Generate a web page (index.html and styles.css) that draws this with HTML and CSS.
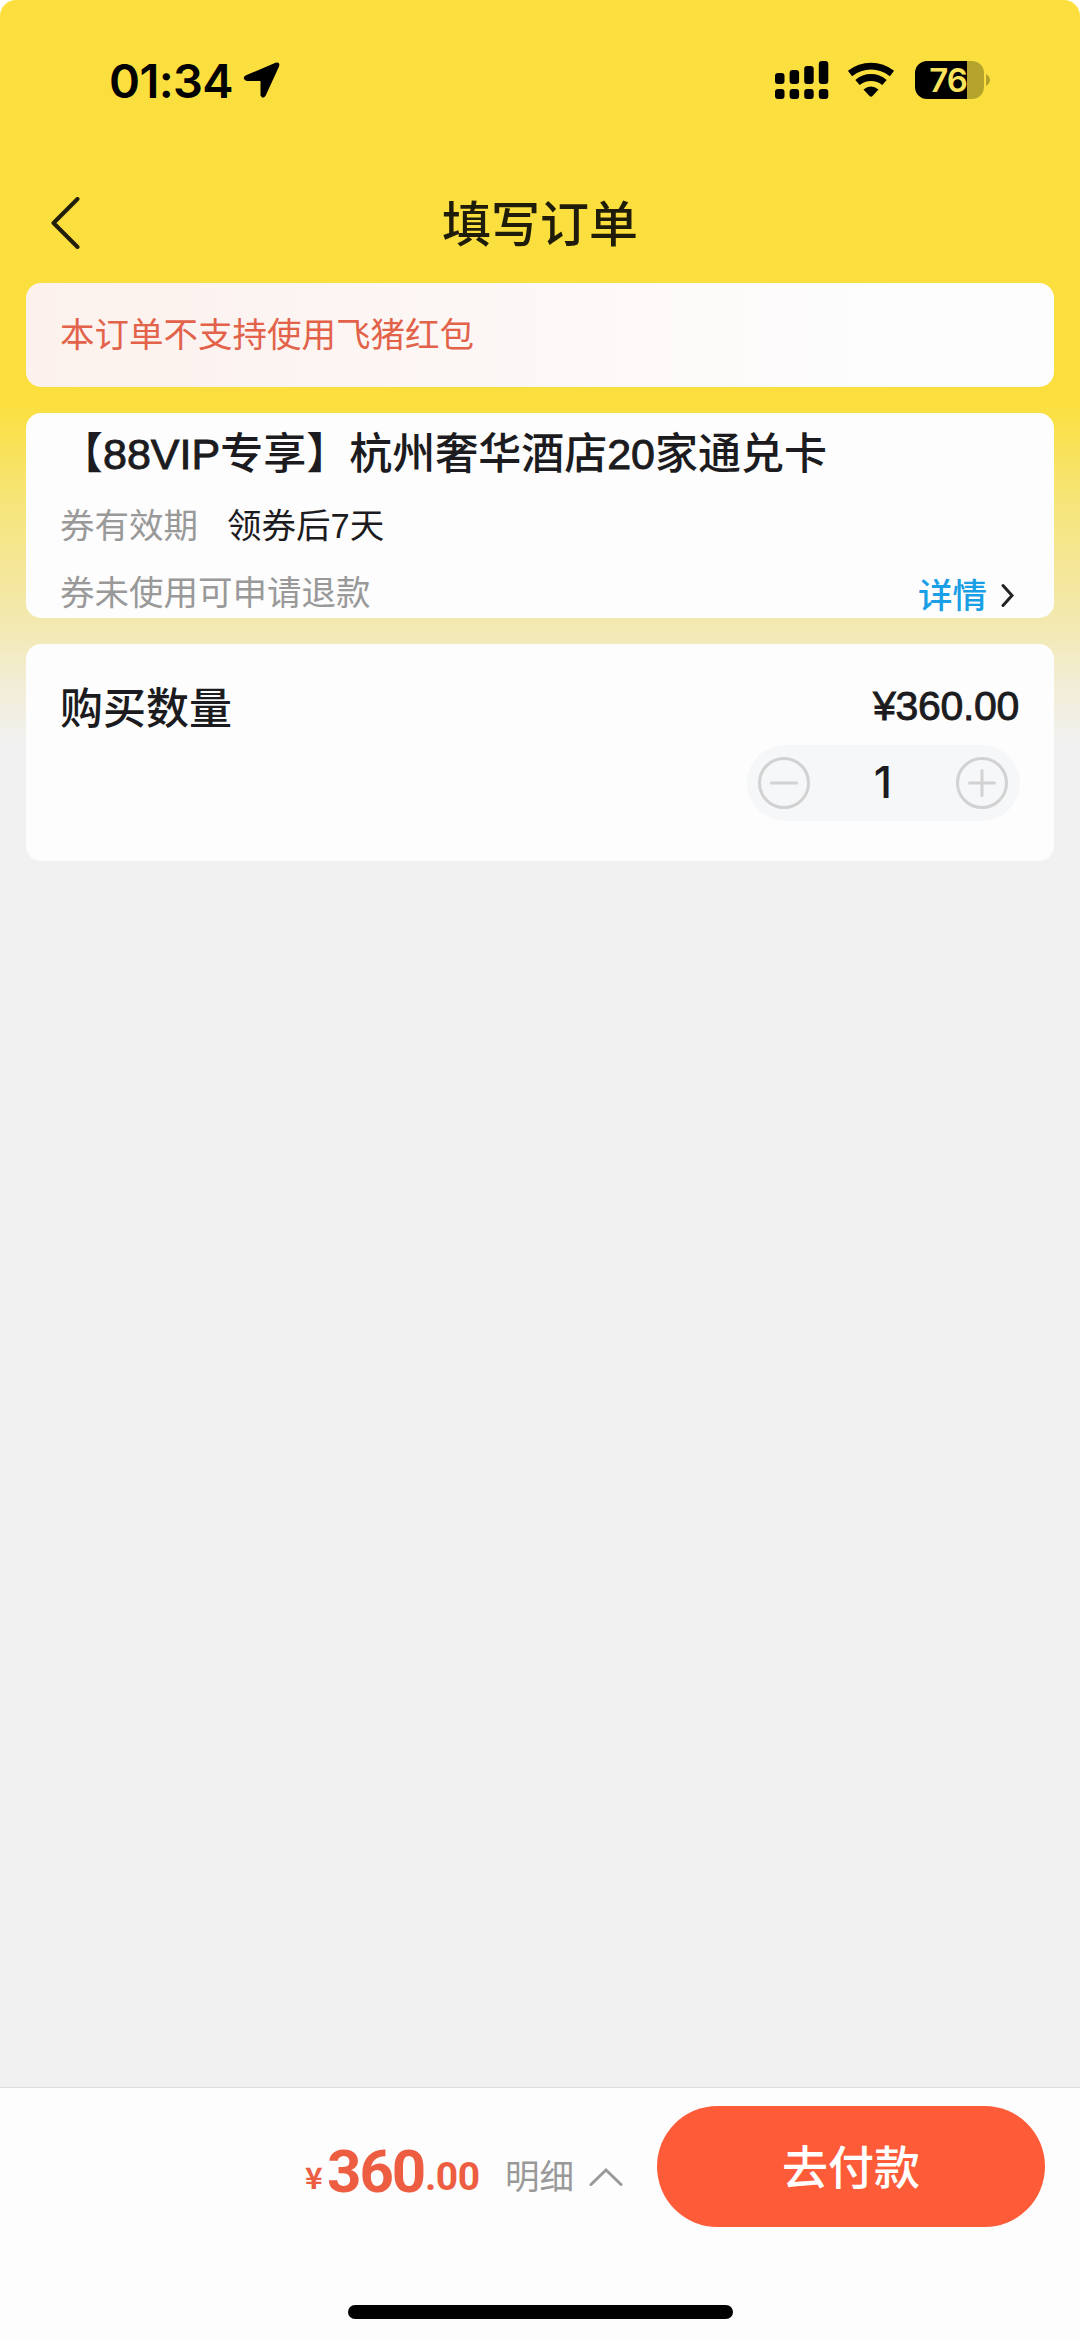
FILE: index.html
```html
<!DOCTYPE html>
<html lang="zh-CN">
<head>
<meta charset="utf-8">
<title>填写订单</title>
<link rel="stylesheet" href="styles.css">
</head>
<body>
<div class="screen">
  <div class="status-bar">
    <span class="time">01:34</span>
    <svg class="location" width="38" height="38" viewBox="0 0 38 38"><path d="M2.500 14.500 32.500 1.800Q37.500 .3 36 5.500L22.500 35Q19.500 38.500 17.500 34.500V20H3.500Q-1.500 17.500 2.500 14.500Z"/></svg>
    <svg class="signal" width="54" height="38" viewBox="0 0 54 38">
      <rect x="0" y="12" width="9.500" height="11" rx="3"/><rect x="14.600" y="9" width="9.500" height="14" rx="3"/><rect x="29.200" y="5" width="9.500" height="18" rx="3"/><rect x="43.800" y="0" width="9.500" height="23" rx="3"/>
      <rect x="0" y="28" width="9.500" height="10" rx="3"/><rect x="14.600" y="28" width="9.500" height="10" rx="3"/><rect x="29.200" y="28" width="9.500" height="10" rx="3"/><rect x="43.800" y="28" width="9.500" height="10" rx="3"/>
    </svg>
    <svg class="wifi" width="48" height="36" viewBox="0 0 48 36">
      <g fill="none" stroke="#000" stroke-width="6.800"><path d="M3 11.500Q12.500 4.200 24 4.200T45 11.500"/><path d="M10.500 20.500Q16.500 15.500 24 15.500T37.500 20.500"/></g>
      <path d="M16.500 27.500Q24 21.500 31.500 27.500L25.500 34Q24 35.500 22.500 34Z"/>
    </svg>
    <span class="battery">76</span>
    <svg class="battery-tip" width="4" height="12" viewBox="0 0 4 12"><path d="M0 0Q4 2.500 4 6T0 12Z" fill="#b6a32c"/></svg>
  </div>

  <header class="nav">
    <svg class="back" width="30" height="52" viewBox="0 0 30 52"><path d="M26.500 2 2.500 26 26.500 50"/></svg>
    <h1 class="nav-title">填写订单</h1>
  </header>

  <main class="cards">
    <section class="card notice">本订单不支持使用飞猪红包</section>

    <section class="card product">
      <h2 class="product-title">【<span class="latin">88VIP</span>专享】杭州奢华酒店<span class="latin">20</span>家通兑卡</h2>
      <p class="line validity"><span class="label">券有效期</span><span>领券后7天</span></p>
      <div class="line refund">
        <span class="label">券未使用可申请退款</span>
        <a class="detail">详情<svg width="15" height="24" viewBox="0 0 15 24"><path d="M3 2.500 12 12.500 3 22.500"/></svg></a>
      </div>
    </section>

    <section class="card quantity">
      <div class="quantity-head"><h2>购买数量</h2><span class="price latin">¥360.00</span></div>
      <div class="stepper">
        <svg width="52" height="52" viewBox="0 0 52 52"><circle cx="26" cy="26" r="24.500"/><path d="M13.500 26h25"/></svg>
        <span class="count">1</span>
        <svg width="52" height="52" viewBox="0 0 52 52"><circle cx="26" cy="26" r="24.500"/><path d="M13.500 26h25M26 13.500v25"/></svg>
      </div>
    </section>
  </main>

  <footer class="footer">
    <div class="pay-row">
      <div class="total"><span class="yen">¥</span><span class="whole">360</span><span class="cents">.00</span></div>
      <div class="breakdown">明细<svg width="34" height="20" viewBox="0 0 34 20"><path d="M2 17.500 17 3 32 17.500"/></svg></div>
      <button class="pay">去付款</button>
    </div>
    <div class="home-indicator"></div>
  </footer>
</div>
</body>
</html>
```

FILE: styles.css
```css
* { box-sizing: border-box; }
body { margin: 0; background: #fff; }
h1, h2, p { margin: 0; font-weight: 500; }
svg { display: block; flex: none; }

.screen {
  width: 1080px;
  height: 2341px;
  display: flex;
  flex-direction: column;
  overflow: hidden;
  border-radius: 16px 16px 0 0;
  background: linear-gradient(to bottom, #fbdf3f 0, #fbdf3f 405px, #f6e578 500px, #f3e9b4 630px, #f2edd3 680px, #f1f1f1 745px);
  font-family: "Liberation Sans", "Noto Sans CJK SC", sans-serif;
  color: #1b1b20;
}

.status-bar {
  display: flex;
  align-items: center;
  height: 162px;
  padding: 0 90px 2px 109px;
}
.time {
  width: 124px;
  padding-top: 2px;
  font: 600 47px/60px Inter, sans-serif;
  letter-spacing: -0.600px;
  color: #000;
}
.location { margin-left: 10px; }
.signal { margin-left: auto; }
.wifi { margin-left: 18px; }
.battery {
  width: 69px;
  height: 38px;
  margin-left: 20px;
  padding-right: 3px;
  border-radius: 12px;
  background: linear-gradient(to right, #000 52px, #b6a32c 52px);
  font: 600 33px/38px Inter, sans-serif;
  letter-spacing: -1px;
  text-align: center;
  color: #fbe45c;
}
.battery-tip { margin-left: 2px; }

.nav {
  display: grid;
  grid-template-columns: 100px 1fr 100px;
  align-items: center;
  height: 121px;
}
.back {
  margin-left: 51px;
  fill: none;
  stroke: #221e0a;
  stroke-width: 4;
  stroke-linecap: round;
  stroke-linejoin: round;
}
.nav-title {
  padding-top: 4px;
  font-size: 49px;
  line-height: 60px;
  text-align: center;
  color: #1f1c0a;
}

.cards {
  flex: 1;
  display: flex;
  flex-direction: column;
  gap: 26px;
  padding: 0 26px;
}
.card {
  border-radius: 15px;
  background: #fdfdfd;
  padding: 0 34px;
}
.notice {
  height: 104px;
  font-size: 34.500px;
  line-height: 105px;
  color: #e2624a;
  background: linear-gradient(to right, #fcf1ed, #fdfdfd 85%);
}
.product { height: 205px; overflow: hidden; }
.product-title {
  padding-top: 11px;
  font-size: 43px;
  line-height: 60px;
  white-space: nowrap;
}
.latin { -webkit-text-stroke: 0.900px currentColor; }
.line { font-size: 34.500px; line-height: 50px; font-weight: 400; }
.label { color: #999; }
.validity { display: flex; gap: 29px; margin-top: 17px; }
.refund {
  display: flex;
  justify-content: space-between;
  margin-top: 17px;
}
.detail {
  display: flex;
  align-items: center;
  gap: 13px;
  padding: 3px 5px 0 0;
  font-weight: 500;
  color: #1a9fe6;
}
.detail svg { margin-top: -3px; fill: none; stroke: #222; stroke-width: 3; stroke-linecap: round; }

.quantity { height: 217px; padding-top: 35px; }
.quantity-head {
  display: flex;
  justify-content: space-between;
  align-items: center;
  height: 60px;
}
.quantity-head h2 { font-size: 43px; line-height: 60px; }
.price { padding: 0 1px 5px 0; font-size: 41px; line-height: 55px; letter-spacing: -0.300px; }
.stepper {
  display: flex;
  justify-content: space-between;
  align-items: center;
  width: 273px;
  height: 76px;
  margin: 6px 0 0 auto;
  padding: 0 12px 0 11px;
  border-radius: 38px;
  background: #f5f7f8;
}
.stepper svg { fill: none; stroke: #d2d2d3; stroke-width: 3; stroke-linecap: round; }
.count { padding-bottom: 2px; font: 500 44px/60px Inter, sans-serif; }

.footer {
  height: 254px;
  border-top: 1px solid #dcdcdc;
  background: #fdfdfd;
}
.pay-row {
  display: flex;
  justify-content: flex-end;
  align-items: center;
  height: 121px;
  margin: 18px 35px 0 0;
}
.total {
  display: flex;
  align-items: baseline;
  width: 175px;
  margin-top: 17px;
  font-family: Roboto, sans-serif;
  font-weight: 700;
  color: #ec5d41;
  line-height: 70px;
}
.yen {
  width: 22px;
  font: 700 30px/60px "Noto Sans CJK SC", sans-serif;
  transform: translateY(-3px);
}
.whole { width: 98px; font-size: 60px; letter-spacing: -2px; }
.cents { font-size: 39px; letter-spacing: -0.500px; transform: translateY(-2px); }
.breakdown {
  display: flex;
  align-items: center;
  gap: 15px;
  margin: 21px 34px 0 25px;
  font-size: 34.500px;
  line-height: 50px;
  color: #999;
}
.breakdown svg { fill: none; stroke: #999; stroke-width: 3; stroke-linecap: round; }
.pay {
  width: 388px;
  height: 121px;
  padding: 0 0 4px;
  border: 0;
  border-radius: 61px;
  background: #fe5b39;
  font: 500 46px/117px "Noto Sans CJK SC", sans-serif;
  color: #fff;
}
.home-indicator {
  width: 385px;
  height: 14px;
  margin: 78px auto 0;
  border-radius: 7px;
  background: #000;
}
```
